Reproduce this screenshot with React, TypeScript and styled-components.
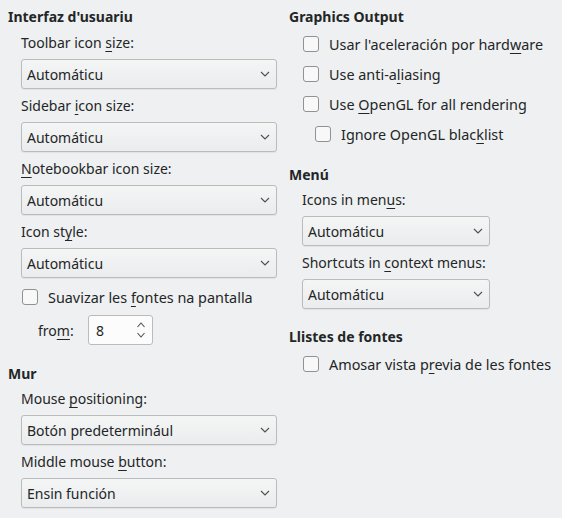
import React from 'react'
import styled, { createGlobalStyle } from 'styled-components'

const GlobalStyle = createGlobalStyle`
  html, body {
    margin: 0;
    padding: 0;
    background: #eff0f1;
  }
  body {
    font-family: "Noto Sans", "DejaVu Sans", sans-serif;
    font-size: 14px;
    color: #232627;
  }
`

const Page = styled.div`
  display: grid;
  grid-template-columns: 281px 1fr;
  padding: 7px 0 0 8px;
  width: 562px;
  height: 518px;
  box-sizing: border-box;
`

const Column = styled.div`
  display: flex;
  flex-direction: column;
`

const Heading = styled.div<{ $top?: number }>`
  font-weight: bold;
  line-height: 20px;
  height: 20px;
  margin-top: ${(p) => p.$top ?? 0}px;
`

const Body = styled.div`
  display: flex;
  flex-direction: column;
  padding-left: 13px;
`

const Label = styled.div<{ $top?: number }>`
  line-height: 20px;
  height: 20px;
  margin-top: ${(p) => p.$top ?? 7}px;
  margin-bottom: 6px;
  white-space: nowrap;
`

const SelectBox = styled.div<{ $width: number }>`
  display: flex;
  align-items: center;
  justify-content: space-between;
  width: ${(p) => p.$width}px;
  height: 30px;
  box-sizing: border-box;
  padding: 0 6px 0 5px;
  border: 1px solid #b9bbbd;
  border-radius: 3px;
  background: linear-gradient(#f4f5f5, #ebeced);
  box-shadow: 0 1px 1px rgba(0, 0, 0, 0.06);
  white-space: nowrap;
`

const CheckRow = styled.div<{ $indent?: number; $top?: number }>`
  display: flex;
  align-items: center;
  height: 22px;
  margin-top: ${(p) => p.$top ?? 8}px;
  padding-left: ${(p) => p.$indent ?? 1}px;
  white-space: nowrap;
`

const CheckText = styled.span`
  font-size: 14.4px;
`

const Box = styled.span`
  width: 16px;
  height: 16px;
  box-sizing: border-box;
  border: 1px solid #8f9193;
  border-radius: 3px;
  background: #f8f8f8;
  margin-right: 10px;
  flex-shrink: 0;
`

const SpinRow = styled.div`
  display: flex;
  align-items: center;
  margin-top: 7px;
  padding-left: 17px;
`

const SpinLabel = styled.span`
  width: 50px;
`

const SpinBox = styled.div`
  display: flex;
  align-items: center;
  justify-content: space-between;
  width: 65px;
  height: 30px;
  box-sizing: border-box;
  padding: 0 6px 0 7px;
  border: 1px solid #b9bbbd;
  border-radius: 3px;
  background: #fcfcfc;
`

const U = styled.span`
  text-decoration: underline;
  text-underline-offset: 3px;
  text-decoration-thickness: 1px;
`

const Chevron = () => (
  <svg width="10" height="6" viewBox="0 0 10 6">
    <path d="M1 1 L5 5 L9 1" fill="none" stroke="#4d4f51" strokeWidth="1.1" />
  </svg>
)

const SpinArrows = () => (
  <svg width="10" height="18" viewBox="0 0 10 18">
    <path d="M1.5 6 L5 2 L8.5 6" fill="none" stroke="#4d4f51" strokeWidth="1.1" />
    <path d="M1.5 12 L5 16 L8.5 12" fill="none" stroke="#4d4f51" strokeWidth="1.1" />
  </svg>
)

const Select = ({ value, width }: { value: string; width: number }) => (
  <SelectBox $width={width}>
    <span>{value}</span>
    <Chevron />
  </SelectBox>
)

const Check = ({ children, indent, top }: { children: React.ReactNode; indent?: number; top?: number }) => (
  <CheckRow $indent={indent} $top={top}>
    <Box />
    <CheckText>{children}</CheckText>
  </CheckRow>
)

export default function App() {
  return (
    <>
      <GlobalStyle />
      <Page>
        <Column>
          <Heading>Interfaz d'usuariu</Heading>
          <Body>
            <Label $top={6}>Toolbar icon <U>s</U>ize:</Label>
            <Select value="Automáticu" width={256} />
            <Label>Sidebar <U>i</U>con size:</Label>
            <Select value="Automáticu" width={256} />
            <Label><U>N</U>otebookbar icon size:</Label>
            <Select value="Automáticu" width={256} />
            <Label>Icon st<U>y</U>le:</Label>
            <Select value="Automáticu" width={256} />
            <Check top={8}>Suavizar les <U>f</U>ontes na pantalla</Check>
            <SpinRow>
              <SpinLabel>fro<U>m</U>:</SpinLabel>
              <SpinBox>
                <span>8</span>
                <SpinArrows />
              </SpinBox>
            </SpinRow>
          </Body>
          <Heading $top={19}>Mur</Heading>
          <Body>
            <Label $top={5}>Mouse <U>p</U>ositioning:</Label>
            <Select value="Botón predeterminául" width={256} />
            <Label>Middle mouse <U>b</U>utton:</Label>
            <Select value="Ensin función" width={256} />
          </Body>
        </Column>
        <Column>
          <Heading>Graphics Output</Heading>
          <Body>
            <Check top={6}>Usar l'aceleración por hard<U>w</U>are</Check>
            <Check>Use anti-a<U>l</U>iasing</Check>
            <Check>Use <U>O</U>penGL for all rendering</Check>
            <Check indent={13}>Ignore OpenGL blac<U>k</U>list</Check>
          </Body>
          <Heading $top={20}>Menú</Heading>
          <Body>
            <Label $top={5}>Icons in men<U>u</U>s:</Label>
            <Select value="Automáticu" width={188} />
            <Label>Shortcuts in <U>c</U>ontext menus:</Label>
            <Select value="Automáticu" width={188} />
          </Body>
          <Heading $top={18}>Llistes de fontes</Heading>
          <Body>
            <Check top={6}>Amosar vista p<U>r</U>evia de les fontes</Check>
          </Body>
        </Column>
      </Page>
    </>
  )
}
